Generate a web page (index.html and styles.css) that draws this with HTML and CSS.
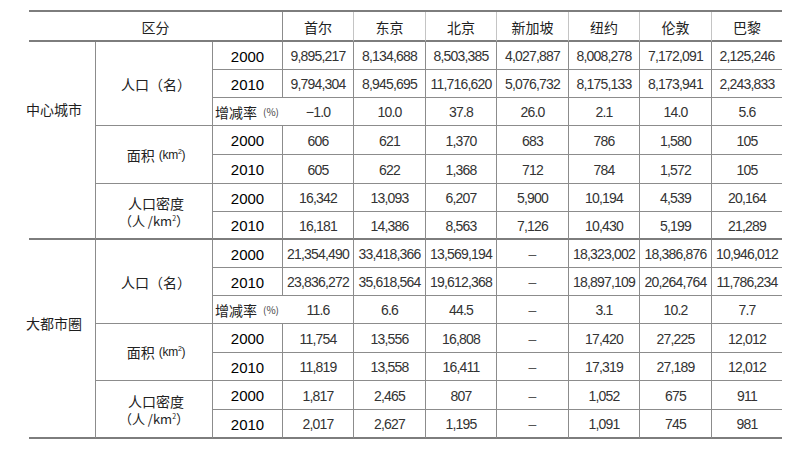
FILE: index.html
```html
<!DOCTYPE html>
<html lang="zh">
<head>
<meta charset="utf-8">
<title>城市比较</title>
<link rel="stylesheet" href="styles.css">
</head>
<body>
<div class="page">
  <div class="tbl">
    <div class="c hd span3">区分</div>
    <div class="c hd">首尔</div>
    <div class="c hd">东京</div>
    <div class="c hd">北京</div>
    <div class="c hd">新加坡</div>
    <div class="c hd">纽约</div>
    <div class="c hd">伦敦</div>
    <div class="c hd nr">巴黎</div>

    <!-- 中心城市 -->
    <div class="c sec sec1 sb"><span class="sec-label">中心城市</span></div>
    <div class="c grp g3">人口（名）</div>
    <div class="c yr">2000</div>
    <div class="c v">9,895,217</div><div class="c v">8,134,688</div><div class="c v">8,503,385</div><div class="c v">4,027,887</div><div class="c v">8,008,278</div><div class="c v">7,172,091</div><div class="c v nr">2,125,246</div>
    <div class="c yr">2010</div>
    <div class="c v">9,794,304</div><div class="c v">8,945,695</div><div class="c v">11,716,620</div><div class="c v">5,076,732</div><div class="c v">8,175,133</div><div class="c v">8,173,941</div><div class="c v nr">2,243,833</div>
    <div class="c rate nr">增减率<span class="pct">(%)</span></div>
    <div class="c v">−1.0</div><div class="c v">10.0</div><div class="c v">37.8</div><div class="c v">26.0</div><div class="c v">2.1</div><div class="c v">14.0</div><div class="c v nr">5.6</div>

    <div class="c grp g2">面积<span class="unit">(km<sup>2</sup>)</span></div>
    <div class="c yr">2000</div>
    <div class="c v">606</div><div class="c v">621</div><div class="c v">1,370</div><div class="c v">683</div><div class="c v">786</div><div class="c v">1,580</div><div class="c v nr">105</div>
    <div class="c yr">2010</div>
    <div class="c v">605</div><div class="c v">622</div><div class="c v">1,368</div><div class="c v">712</div><div class="c v">784</div><div class="c v">1,572</div><div class="c v nr">105</div>

    <div class="c grp g2 sb dens"><span>人口密度</span><span class="dens2">（人 /km<sup>2</sup>）</span></div>
    <div class="c yr">2000</div>
    <div class="c v">16,342</div><div class="c v">13,093</div><div class="c v">6,207</div><div class="c v">5,900</div><div class="c v">10,194</div><div class="c v">4,539</div><div class="c v nr">20,164</div>
    <div class="c yr sb">2010</div>
    <div class="c v sb">16,181</div><div class="c v sb">14,386</div><div class="c v sb">8,563</div><div class="c v sb">7,126</div><div class="c v sb">10,430</div><div class="c v sb">5,199</div><div class="c v sb nr">21,289</div>

    <!-- 大都市圈 -->
    <div class="c sec sec2 sb"><span class="sec-label">大都市圈</span></div>
    <div class="c grp g3">人口（名）</div>
    <div class="c yr">2000</div>
    <div class="c v">21,354,490</div><div class="c v">33,418,366</div><div class="c v">13,569,194</div><div class="c v dash">–</div><div class="c v">18,323,002</div><div class="c v">18,386,876</div><div class="c v nr">10,946,012</div>
    <div class="c yr">2010</div>
    <div class="c v">23,836,272</div><div class="c v">35,618,564</div><div class="c v">19,612,368</div><div class="c v dash">–</div><div class="c v">18,897,109</div><div class="c v">20,264,764</div><div class="c v nr">11,786,234</div>
    <div class="c rate nr">增减率<span class="pct">(%)</span></div>
    <div class="c v">11.6</div><div class="c v">6.6</div><div class="c v">44.5</div><div class="c v dash">–</div><div class="c v">3.1</div><div class="c v">10.2</div><div class="c v nr">7.7</div>

    <div class="c grp g2">面积<span class="unit">(km<sup>2</sup>)</span></div>
    <div class="c yr">2000</div>
    <div class="c v">11,754</div><div class="c v">13,556</div><div class="c v">16,808</div><div class="c v dash">–</div><div class="c v">17,420</div><div class="c v">27,225</div><div class="c v nr">12,012</div>
    <div class="c yr">2010</div>
    <div class="c v">11,819</div><div class="c v">13,558</div><div class="c v">16,411</div><div class="c v dash">–</div><div class="c v">17,319</div><div class="c v">27,189</div><div class="c v nr">12,012</div>

    <div class="c grp g2 sb dens"><span>人口密度</span><span class="dens2">（人 /km<sup>2</sup>）</span></div>
    <div class="c yr">2000</div>
    <div class="c v">1,817</div><div class="c v">2,465</div><div class="c v">807</div><div class="c v dash">–</div><div class="c v">1,052</div><div class="c v">675</div><div class="c v nr">911</div>
    <div class="c yr sb">2010</div>
    <div class="c v sb">2,017</div><div class="c v sb">2,627</div><div class="c v sb">1,195</div><div class="c v sb dash">–</div><div class="c v sb">1,091</div><div class="c v sb">745</div><div class="c v sb nr">981</div>
  </div>
</div>
</body>
</html>
```

FILE: styles.css
```css
html, body {
  margin: 0;
  padding: 0;
  background: #ffffff;
}

.page {
  padding: 10px 0 0 29px;
}

.tbl {
  display: grid;
  width: 753px;
  grid-template-columns: 67px 117px 70px 71px 72px 71px 72px 71px 72px 70px;
  grid-template-rows: 30px 28px 28px 28px 29px 29px 28px 28px 28px 28px 28px 29px 28px 29px 29px;
  border-top: 2px solid #7d7d7d;
  font-family: "Liberation Sans", Arial, "Noto Sans CJK SC", sans-serif;
  color: #2b2b2b;
}

.c {
  box-sizing: border-box;
  display: flex;
  align-items: center;
  justify-content: center;
  border-right: 1px solid #8c8c8c;
  border-bottom: 1px solid #8c8c8c;
  white-space: nowrap;
}

.nr {
  border-right: none;
}

.sb {
  border-bottom: 2px solid #7d7d7d;
}

.hd {
  font-family: "Noto Sans CJK SC", sans-serif;
  font-size: 14px;
  color: #222;
  border-bottom: 2px solid #7d7d7d;
  border-right-color: #c4c4c4;
  padding-top: 1px;
}

.span3 {
  grid-column: span 3;
  border-right-color: #8c8c8c;
}

.sec {
  grid-row: span 7;
  align-items: flex-start;
  justify-content: flex-start;
  font-family: "Noto Sans CJK SC", sans-serif;
  font-size: 14px;
  line-height: 20px;
  color: #1e1e1e;
}

.sec1 { padding-top: 57px; }
.sec2 { padding-top: 73px; }

.sec-label {
  margin-left: -3px;
}

.grp {
  font-family: "Noto Sans CJK SC", sans-serif;
  font-size: 14px;
  color: #222;
  padding-left: 4px;
}

.g3 { grid-row: span 3; }
.g2 { grid-row: span 2; }

.unit {
  font-family: "Liberation Sans", Arial, sans-serif;
  font-size: 12px;
  margin-left: 4px;
  letter-spacing: -0.3px;
}

.unit sup,
.dens2 sup {
  font-size: 7px;
  vertical-align: 5px;
  line-height: 0;
}

.dens {
  flex-direction: column;
  line-height: 18px;
  padding-top: 1px;
}

.dens2 {
  font-size: 13px;
  margin-left: -4px;
}

.yr {
  font-size: 15px;
  color: #000;
  padding-top: 1px;
}

.v {
  font-size: 14px;
  letter-spacing: -0.8px;
  color: #333;
  padding-top: 1px;
}

.dash {
  color: #555;
  letter-spacing: 0;
}

.rate {
  justify-content: flex-start;
  padding-left: 2px;
  font-family: "Noto Sans CJK SC", sans-serif;
  font-size: 14px;
  color: #222;
}

.pct {
  font-size: 10px;
  margin-left: 6px;
  color: #444;
}
```
